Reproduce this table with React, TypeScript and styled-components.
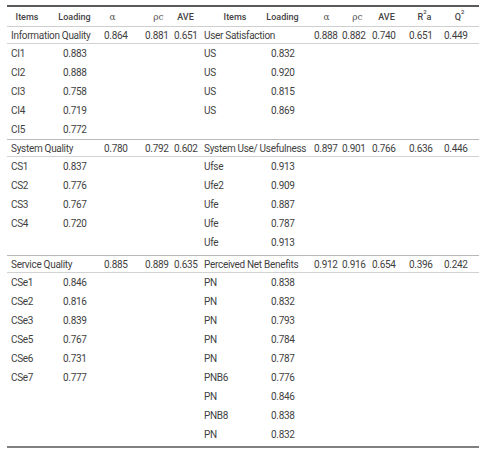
import * as React from 'react';
import styled, { createGlobalStyle } from 'styled-components';

const GlobalStyle = createGlobalStyle`
  body {
    margin: 0;
    background: #ffffff;
  }
`;

const COLS = '56px 41px 41px 29px 26px 71px 43px 28px 30px 37px 35px 35px';

interface ISection {
  gap: number;
  left: { title: string; stats: string[]; rows: [string, string][] };
  right: { title: string; stats: string[]; rows: [string, string][] };
}

const sections: ISection[] = [
  {
    gap: 0,
    left: {
      title: 'Information Quality',
      stats: ['0.864', '0.881', '0.651'],
      rows: [['CI1', '0.883'], ['CI2', '0.888'], ['CI3', '0.758'], ['CI4', '0.719'], ['CI5', '0.772']],
    },
    right: {
      title: 'User Satisfaction',
      stats: ['0.888', '0.882', '0.740', '0.651', '0.449'],
      rows: [['US', '0.832'], ['US', '0.920'], ['US', '0.815'], ['US', '0.869']],
    },
  },
  {
    gap: 3,
    left: {
      title: 'System Quality',
      stats: ['0.780', '0.792', '0.602'],
      rows: [['CS1', '0.837'], ['CS2', '0.776'], ['CS3', '0.767'], ['CS4', '0.720']],
    },
    right: {
      title: 'System Use/ Usefulness',
      stats: ['0.897', '0.901', '0.766', '0.636', '0.446'],
      rows: [['Ufse', '0.913'], ['Ufe2', '0.909'], ['Ufe', '0.887'], ['Ufe', '0.787'], ['Ufe', '0.913']],
    },
  },
  {
    gap: 2,
    left: {
      title: 'Service Quality',
      stats: ['0.885', '0.889', '0.635'],
      rows: [
        ['CSe1', '0.846'], ['CSe2', '0.816'], ['CSe3', '0.839'],
        ['CSe5', '0.767'], ['CSe6', '0.731'], ['CSe7', '0.777'],
      ],
    },
    right: {
      title: 'Perceived Net Benefits',
      stats: ['0.912', '0.916', '0.654', '0.396', '0.242'],
      rows: [
        ['PN', '0.838'], ['PN', '0.832'], ['PN', '0.793'], ['PN', '0.784'], ['PN', '0.787'],
        ['PNB6', '0.776'], ['PN', '0.846'], ['PNB8', '0.838'], ['PN', '0.832'],
      ],
    },
  },
];

const Page = styled.div`
  padding: 5px 9px 0 7px;
  font-family: Roboto, 'Liberation Sans', sans-serif;
  color: #3f3f3f;
`;

const Table = styled.div`
  width: 472px;
  border-bottom: 2px solid #808080;
`;

const Row = styled.div`
  display: grid;
  grid-template-columns: ${COLS};
  align-items: center;
`;

const HeaderRow = styled(Row)`
  height: 19px;
  border-top: 2px solid #5a5a5a;
  border-bottom: 1px solid #cfcfcf;
`;

const TitleRow = styled(Row)`
  height: 16px;
  border-bottom: 1px solid #d2d2d2;
`;

const ItemRow = styled(Row)`
  height: 19px;
`;

const Section = styled.div<{ $last: boolean; $gap: number }>`
  padding-bottom: ${(p) => p.$gap}px;
  border-bottom: ${(p) => (p.$last ? 'none' : '1px solid #b8b8b8')};
`;

const HeadCell = styled.div`
  display: flex;
  font-size: 9px;
  font-weight: 500;
  color: #444;
`;

const HeadLabel = styled.span<{ $w: number; $pad: number }>`
  display: flex;
  justify-content: center;
  width: ${(p) => p.$w}px;
  margin-left: ${(p) => p.$pad}px;
  white-space: nowrap;
`;

const Greek = styled.span`
  font-family: 'DejaVu Serif', 'Liberation Serif', serif;
  font-weight: 400;
  font-size: 9px;
  color: #555;
`;

const Sup = styled.sup`
  font-size: 6px;
  vertical-align: 4px;
  line-height: 0;
`;

const Cell = styled.div<{ $span?: number }>`
  grid-column: span ${(p) => p.$span || 1};
  font-size: 10px;
  letter-spacing: -0.3px;
  white-space: nowrap;
`;

const ItemCell = styled(Cell)`
  padding-left: 4px;
`;

const heads: { label: React.ReactNode; w: number; pad: number }[] = [
  { label: 'Items', w: 32, pad: 4 },
  { label: 'Loading', w: 23, pad: 0 },
  { label: <Greek>α</Greek>, w: 23, pad: -3 },
  { label: <Greek>ρc</Greek>, w: 23, pad: 2 },
  { label: 'AVE', w: 23, pad: 0 },
  { label: 'Items', w: 62, pad: 4 },
  { label: 'Loading', w: 23, pad: 0 },
  { label: <Greek>α</Greek>, w: 23, pad: 1 },
  { label: <Greek>ρc</Greek>, w: 23, pad: 4 },
  { label: 'AVE', w: 23, pad: 3 },
  { label: <>R<Sup>2</Sup>a</>, w: 23, pad: 4 },
  { label: <>Q<Sup>2</Sup></>, w: 23, pad: 4 },
];

const SectionBlock = ({ section, last }: { section: ISection; last: boolean }) => {
  const { left, right, gap } = section;
  const count = Math.max(left.rows.length, right.rows.length);
  return (
    <Section $last={last} $gap={gap}>
      <TitleRow>
        <ItemCell $span={2}>{left.title}</ItemCell>
        {left.stats.map((s, i) => <Cell key={`l${i}`}>{s}</Cell>)}
        <ItemCell $span={2}>{right.title}</ItemCell>
        {right.stats.map((s, i) => <Cell key={`r${i}`}>{s}</Cell>)}
      </TitleRow>
      {Array.from({ length: count }).map((_, i) => {
        const l = left.rows[i];
        const r = right.rows[i];
        return (
          <ItemRow key={i}>
            <ItemCell>{l ? l[0] : ''}</ItemCell>
            <Cell>{l ? l[1] : ''}</Cell>
            <Cell $span={3} />
            <ItemCell>{r ? r[0] : ''}</ItemCell>
            <Cell>{r ? r[1] : ''}</Cell>
            <Cell $span={5} />
          </ItemRow>
        );
      })}
    </Section>
  );
};

const App = () => (
  <Page>
    <GlobalStyle />
    <Table>
      <HeaderRow>
        {heads.map((h, i) => (
          <HeadCell key={i}>
            <HeadLabel $w={h.w} $pad={h.pad}>{h.label}</HeadLabel>
          </HeadCell>
        ))}
      </HeaderRow>
      {sections.map((s, i) => (
        <SectionBlock key={i} section={s} last={i === sections.length - 1} />
      ))}
    </Table>
  </Page>
);

export default App;
